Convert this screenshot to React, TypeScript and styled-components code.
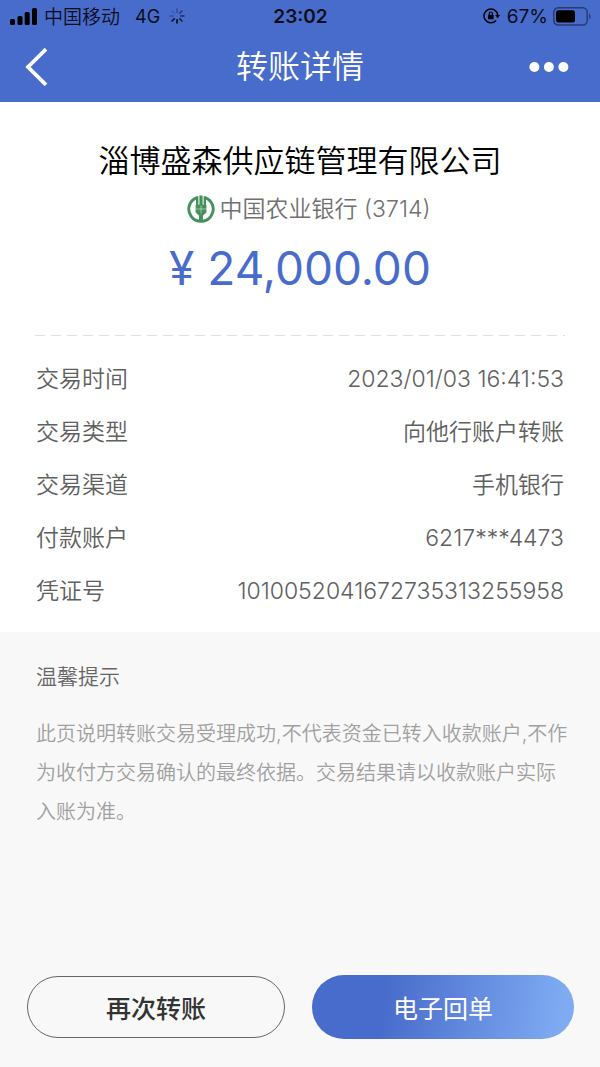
import React from "react";
import styled, { createGlobalStyle } from "styled-components";

const BLUE = "#486ccb";

const GlobalStyle = createGlobalStyle`
  *, *::before, *::after { box-sizing: border-box; }
  body {
    margin: 0;
    background: #f8f8f8;
    font-family: Inter, "Noto Sans CJK SC", sans-serif;
  }
  button { font-family: inherit; cursor: pointer; }
`;

const Page = styled.div`
  display: flex;
  flex-direction: column;
  min-height: 100vh;
`;

const Header = styled.header`
  background: ${BLUE};
`;

const StatusBar = styled.div`
  display: grid;
  grid-template-columns: 1fr auto 1fr;
  align-items: center;
  height: 32px;
  padding: 0 9px 0 10px;
  color: #0b0e18;
  font-size: 19px;
  line-height: 28px;
`;

const StatusGroup = styled.div<{ $end?: boolean }>`
  display: flex;
  align-items: center;
  justify-content: ${(p) => (p.$end ? "flex-end" : "flex-start")};
  gap: ${(p) => (p.$end ? 5 : 7)}px;
`;

const StatusText = styled.span`
  padding-top: 2px;
`;

const Carrier = styled(StatusText)`
  padding-top: 4px;
  font-weight: 350;
`;

const Network = styled(StatusText)`
  margin: 0 2px 0 8px;
  font-size: 18px;
`;

const Clock = styled.time`
  padding-top: 2px;
  font-weight: 600;
`;

const NavBar = styled.nav`
  display: grid;
  grid-template-columns: 1fr auto 1fr;
  align-items: center;
  height: 70px;
  padding: 0 24px;
`;

const NavButton = styled.button<{ $end?: boolean }>`
  display: flex;
  justify-self: ${(p) => (p.$end ? "end" : "start")};
  padding: 0;
  border: 0;
  background: none;
  color: #fff;
`;

const NavTitle = styled.h1`
  margin: 0;
  color: #fff;
  font-size: 32px;
  font-weight: 350;
  line-height: 64px;
`;

const Receipt = styled.main`
  padding: 36px 36px 14px;
  background: #fff;
`;

const Summary = styled.section`
  display: flex;
  flex-direction: column;
  align-items: center;
`;

const Payee = styled.h2`
  margin: 0;
  color: #000;
  font-size: 31px;
  font-weight: 350;
  line-height: 46px;
`;

const Bank = styled.p`
  display: flex;
  align-items: center;
  gap: 5px;
  margin: 8px 0 0;
  padding-left: 17px;
  color: #707070;
  font-size: 23px;
  font-weight: 350;
  line-height: 34px;
`;

const Amount = styled.p`
  margin: 14px 0 0;
  color: ${BLUE};
  font-size: 46px;
  line-height: 56px;
`;

const Divider = styled.hr`
  height: 1px;
  margin: 39px -1px 17px;
  border: 0;
  background: repeating-linear-gradient(90deg, #e0e0e0 0 10px, transparent 10px 16px);
`;

const Details = styled.dl`
  margin: 0;
`;

const DetailRow = styled.div`
  display: flex;
  justify-content: space-between;
  color: #606060;
  font-size: 23px;
  font-weight: 350;
  line-height: 53px;
`;

const Term = styled.dt``;

const Value = styled.dd`
  margin: 0;
`;

const Notice = styled.section`
  flex: 1;
  padding: 28px 30px 28px 36px;
`;

const NoticeTitle = styled.h3`
  margin: 0;
  color: #666;
  font-size: 21px;
  font-weight: 350;
  line-height: 34px;
`;

const NoticeText = styled.p`
  margin: 21px 0 0;
  color: #a0a0a0;
  font-size: 20px;
  font-weight: 350;
  line-height: 39px;
`;

const Actions = styled.footer`
  display: grid;
  grid-template-columns: 63fr 64fr;
  align-items: center;
  gap: 27px;
  padding: 0 26px 28px 27px;
`;

const ActionButton = styled.button<{ $primary?: boolean }>`
  height: ${(p) => (p.$primary ? 64 : 62)}px;
  padding: 0;
  border: ${(p) => (p.$primary ? "0" : "1px solid #666")};
  border-radius: 32px;
  background: ${(p) =>
    p.$primary ? `linear-gradient(97deg, ${BLUE} 28%, #7fabf3 95%)` : "transparent"};
  color: ${(p) => (p.$primary ? "#fff" : "#333")};
  font-size: 25px;
  font-weight: ${(p) => (p.$primary ? 400 : 500)};
`;

const SignalIcon = () => (
  <svg width="27" height="17" viewBox="0 0 27 17" fill="#000" aria-hidden="true">
    <rect x="0" y="11" width="5" height="6" rx="1.5" />
    <rect x="7.5" y="8" width="5" height="9" rx="1.5" />
    <rect x="14.7" y="4" width="5" height="13" rx="1.5" />
    <rect x="22" y="0" width="5" height="17" rx="1.5" />
  </svg>
);

const SPOKES = [0.3, 0.5, 0.6, 0.75, 1, 0.9, 0.25, 0.15];

const SpinnerIcon = () => (
  <svg width="16" height="16" viewBox="0 0 16 16" stroke="#000" strokeWidth="1.5" strokeLinecap="round" aria-hidden="true">
    {SPOKES.map((opacity, i) => (
      <line key={i} x1="8" y1="1" x2="8" y2="4.2" opacity={opacity} transform={`rotate(${i * 45} 8 8)`} />
    ))}
  </svg>
);

const RotationLockIcon = () => (
  <svg width="19" height="16" viewBox="0 0 19 16" fill="none" stroke="#000" strokeWidth="1.5" aria-hidden="true">
    <path d="M13.1 12.4A6.9 6.9 0 1 1 14.7 7" />
    <path d="M12.2 7h4.8l-2.4 3.6z" fill="#000" stroke="none" />
    <rect x="5" y="6.8" width="5.6" height="4.4" rx=".5" fill="#000" stroke="none" />
    <path d="M6.2 7V5.6a1.6 1.6 0 0 1 3.2 0V7" strokeWidth="1.1" />
  </svg>
);

const BatteryIcon = () => (
  <svg width="38" height="19" viewBox="0 0 38 19" aria-hidden="true">
    <rect x=".8" y=".8" width="33.4" height="17.2" rx="4.5" fill="none" stroke="#000" strokeOpacity=".45" strokeWidth="1.5" />
    <rect x="3" y="3.2" width="19" height="12.4" rx="2.5" fill="#000" />
    <path d="M36 6.5c2 1 2 5 0 6z" fill="#000" fillOpacity=".45" />
  </svg>
);

const BackIcon = () => (
  <svg width="24" height="38" viewBox="0 0 24 38" fill="none" stroke="currentColor" strokeWidth="3.8" aria-hidden="true">
    <path d="M22 1.2 4 19l18 17.8" />
  </svg>
);

const MoreIcon = () => (
  <svg width="47" height="10" viewBox="0 0 47 10" fill="currentColor" aria-hidden="true">
    <circle cx="5.4" cy="5" r="5" />
    <circle cx="19.9" cy="5" r="5" />
    <circle cx="34.4" cy="5" r="5" />
  </svg>
);

const BankLogo = () => (
  <svg width="28" height="28" viewBox="0 0 28 28" aria-hidden="true">
    <g fill="none" stroke="#44915b">
      <path d="M10 2.6A12.2 12.2 0 1 0 18 2.6" strokeWidth="2.9" />
      <path d="M14 18v9" strokeWidth="4" />
    </g>
    <path
      fill="#44915b"
      d="M12.4 0.4h3.2v9.4h1V1.2h2.4v8.6h.4v7.8L16 20.6h-4L8.6 17.6V9.8h.4V1.2h2.4v8.6h1z"
    />
    <path d="M14 10.5v8M8.8 14h10.4" fill="none" stroke="#fff" strokeWidth=".7" opacity=".7" />
  </svg>
);

const DETAILS = [
  ["交易时间", "2023/01/03 16:41:53"],
  ["交易类型", "向他行账户转账"],
  ["交易渠道", "手机银行"],
  ["付款账户", "6217***4473"],
  ["凭证号", "1010052041672735313255958"],
];

export default function App() {
  return (
    <Page lang="zh-CN">
      <GlobalStyle />
      <Header>
        <StatusBar>
          <StatusGroup>
            <SignalIcon />
            <Carrier>中国移动</Carrier>
            <Network>4G</Network>
            <SpinnerIcon />
          </StatusGroup>
          <Clock>23:02</Clock>
          <StatusGroup $end>
            <RotationLockIcon />
            <StatusText>67%</StatusText>
            <BatteryIcon />
          </StatusGroup>
        </StatusBar>
        <NavBar>
          <NavButton type="button" aria-label="返回">
            <BackIcon />
          </NavButton>
          <NavTitle>转账详情</NavTitle>
          <NavButton type="button" aria-label="更多" $end>
            <MoreIcon />
          </NavButton>
        </NavBar>
      </Header>
      <Receipt>
        <Summary>
          <Payee>淄博盛森供应链管理有限公司</Payee>
          <Bank>
            <BankLogo />
            <span>中国农业银行 (3714)</span>
          </Bank>
          <Amount>¥ 24,000.00</Amount>
        </Summary>
        <Divider />
        <Details>
          {DETAILS.map(([term, value]) => (
            <DetailRow key={term}>
              <Term>{term}</Term>
              <Value>{value}</Value>
            </DetailRow>
          ))}
        </Details>
      </Receipt>
      <Notice>
        <NoticeTitle>温馨提示</NoticeTitle>
        <NoticeText>
          此页说明转账交易受理成功,不代表资金已转入收款账户,不作为收付方交易确认的最终依据。交易结果请以收款账户实际入账为准。
        </NoticeText>
      </Notice>
      <Actions>
        <ActionButton type="button">再次转账</ActionButton>
        <ActionButton type="button" $primary>
          电子回单
        </ActionButton>
      </Actions>
    </Page>
  );
}
